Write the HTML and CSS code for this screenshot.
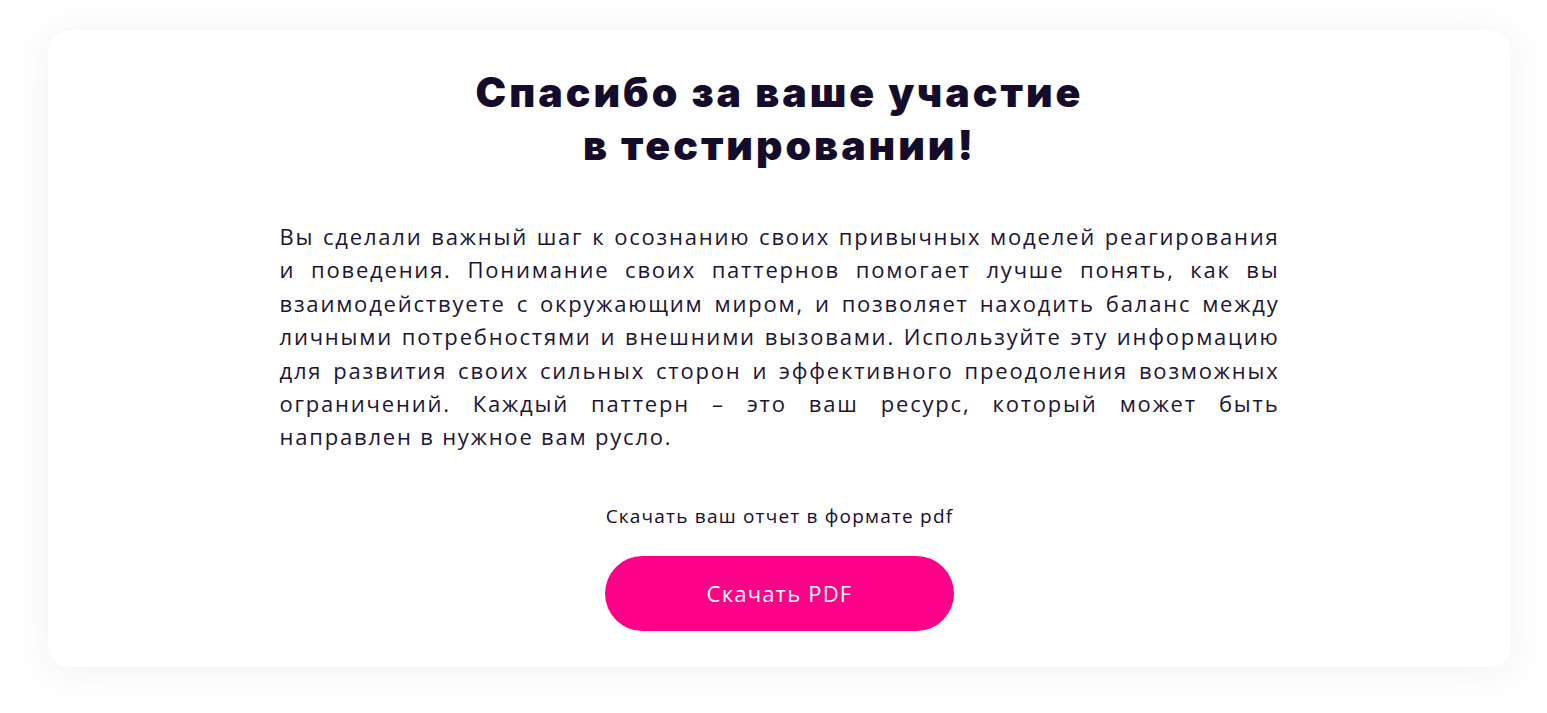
FILE: index.html
```html
<!DOCTYPE html>
<html lang="ru">
<head>
<meta charset="utf-8">
<title>Спасибо</title>
<link rel="stylesheet" href="styles.css">
</head>
<body>
<main class="page">
  <section class="card">
    <h1 class="title">Спасибо за ваше участие<br>в тестировании!</h1>
    <p class="text">Вы сделали важный шаг к осознанию своих привычных моделей реагирования и поведения. Понимание своих паттернов помогает лучше понять, как вы взаимодействуете с окружающим миром, и позволяет находить баланс между личными потребностями и внешними вызовами. Используйте эту информацию для развития своих сильных сторон и эффективного преодоления возможных ограничений. Каждый паттерн – это ваш ресурс, который может быть направлен в нужное вам русло.</p>
    <p class="note">Скачать ваш отчет в формате pdf</p>
    <button class="btn" type="button">Скачать PDF</button>
  </section>
</main>
</body>
</html>
```
FILE: styles.css
```css
* { box-sizing: border-box; }
html, body { margin: 0; padding: 0; background: #ffffff; }
body { font-family: "Open Sans", "Noto Sans", sans-serif; color: #1a1233; }
.page {
  padding: 31px 36px 46px 48px;
}
.card {
  background: #fff;
  border-radius: 20px;
  box-shadow: 0 4px 40px rgba(40, 40, 90, 0.07);
  display: flex;
  flex-direction: column;
  align-items: center;
  padding: 35px 0 36px;
  min-height: 636px;
}
.title {
  margin: 0;
  font-family: Inter, "Noto Sans", sans-serif;
  font-weight: 900;
  font-size: 41px;
  line-height: 53px;
  text-align: center;
  color: #150c2c;
  letter-spacing: 3px;
}
.text {
  width: 1000px;
  margin: 48px 0 0;
  font-size: 22px;
  line-height: 33.4px;
  letter-spacing: 1.8px;
  text-align: justify;
  color: #1c1536;
}
.note {
  margin: 50px 0 0;
  font-size: 19px;
  line-height: 24px;
  letter-spacing: 1.2px;
  color: #150c2c;
}
.btn {
  margin-top: 28px;
  width: 349px;
  height: 75px;
  border: 0;
  border-radius: 38px;
  background: #ff0088;
  color: #fff;
  font-family: "Open Sans", "Noto Sans", sans-serif;
  font-size: 22px;
  letter-spacing: 1.2px;
  cursor: pointer;
}
```
